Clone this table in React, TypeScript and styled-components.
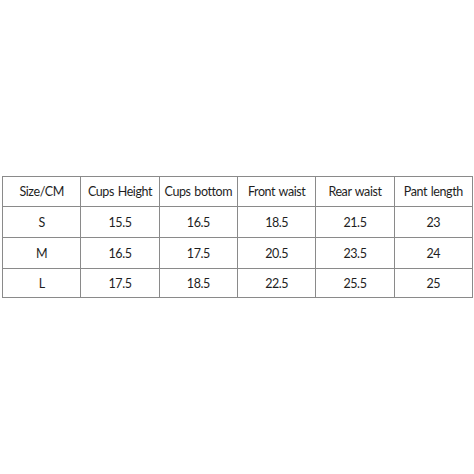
import React from "react";
import styled, { createGlobalStyle } from "styled-components";

const Global = createGlobalStyle`
  html, body { margin: 0; padding: 0; background: #ffffff; }
`;

const Page = styled.div`
  width: 474px;
  height: 474px;
  display: flex;
  align-items: center;
  justify-content: flex-start;
  padding-left: 2px;
  box-sizing: border-box;
`;

const Table = styled.table`
  width: 471px;
  border-collapse: collapse;
  table-layout: fixed;
  font-family: Lato, "Open Sans", sans-serif;
  font-size: 12.5px;
  letter-spacing: -0.42px;
  word-spacing: 1px;
  color: #1e1e1e;
`;

const Cell = styled.td<{ $h?: number }>`
  border: 1.5px solid #8a8a8a;
  height: ${(p) => p.$h ?? 29}px;
  padding: 0;
  text-align: center;
  vertical-align: middle;
`;

const headers = ["Size/CM", "Cups Height", "Cups bottom", "Front waist", "Rear waist", "Pant length"];
const rows = [
  ["S", "15.5", "16.5", "18.5", "21.5", "23"],
  ["M", "16.5", "17.5", "20.5", "23.5", "24"],
  ["L", "17.5", "18.5", "22.5", "25.5", "25"],
];

export default function App() {
  return (
    <>
      <Global />
      <Page>
        <Table>
          <tbody>
            <tr>
              {headers.map((h) => (
                <Cell key={h} $h={29}>{h}</Cell>
              ))}
            </tr>
            {rows.map((r, i) => (
              <tr key={i}>
                {r.map((c, j) => (
                  <Cell key={j} $h={i === 2 ? 28 : 30}>{c}</Cell>
                ))}
              </tr>
            ))}
          </tbody>
        </Table>
      </Page>
    </>
  );
}
